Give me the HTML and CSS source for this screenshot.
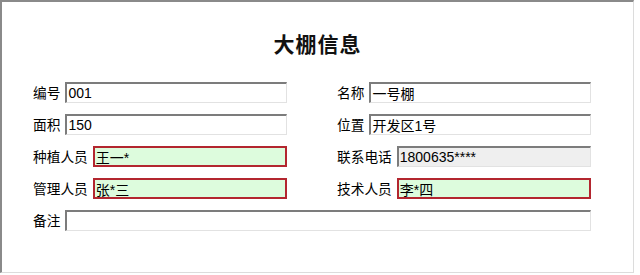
FILE: index.html
```html
<!DOCTYPE html>
<html lang="zh-CN">
<head>
    <meta charset="UTF-8">
    <meta name="viewport" content="width=device-width, initial-scale=1.0">
    <title>大棚信息</title>
    <link rel="stylesheet" href="styles.css">
</head>
<body>
    <div class="panel">
        <h2 class="title">大棚信息</h2>

        <form class="info-form">
            <div class="field">
                <label for="bh">编号</label>
                <input type="text" id="bh" value="001">
            </div>
            <div class="field">
                <label for="mc">名称</label>
                <input type="text" id="mc" value="一号棚">
            </div>
            <div class="field">
                <label for="mj">面积</label>
                <input type="text" id="mj" value="150">
            </div>
            <div class="field">
                <label for="wz">位置</label>
                <input type="text" id="wz" value="开发区1号">
            </div>
            <div class="field">
                <label for="zz">种植人员</label>
                <input type="text" id="zz" class="required" value="王一*">
            </div>
            <div class="field">
                <label for="dh">联系电话</label>
                <input type="text" id="dh" class="readonly" value="1800635****" readonly>
            </div>
            <div class="field">
                <label for="gl">管理人员</label>
                <input type="text" id="gl" class="required" value="张*三">
            </div>
            <div class="field">
                <label for="js">技术人员</label>
                <input type="text" id="js" class="required" value="李*四">
            </div>
            <div class="field wide">
                <label for="bz">备注</label>
                <input type="text" id="bz" value="">
            </div>
        </form>
    </div>
</body>
</html>
```

FILE: styles.css
```css
body {
    margin: 0;
    background-color: #fff;
    font-family: 'Liberation Sans', 'Noto Sans CJK SC', sans-serif;
    color: #000;
}

.panel {
    box-sizing: border-box;
    width: 634px;
    height: 273px;
    padding-top: 31px;
    border-top: 2px solid #8a8a8a;
    border-left: 2px solid #8a8a8a;
    border-right: 1px solid #dcdcdc;
    border-bottom: 1px solid #dcdcdc;
}

.title {
    margin: 0;
    text-align: center;
    font-size: 21px;
    line-height: 24px;
    letter-spacing: 1px;
    font-weight: bold;
    color: #111;
}

.info-form {
    display: grid;
    grid-template-columns: 254px 254px;
    column-gap: 50px;
    row-gap: 11px;
    margin-top: 25px;
    padding-left: 31px;
}

.field {
    display: flex;
    align-items: center;
    gap: 5px;
}

.field.wide {
    grid-column: 1 / -1;
}

label {
    font-family: 'Noto Sans CJK SC', sans-serif;
    font-size: 13.7px;
    line-height: 21px;
    white-space: nowrap;
}

input {
    flex: 1;
    min-width: 0;
    box-sizing: border-box;
    height: 21px;
    margin: 0;
    padding: 0 1px;
    font-family: 'Liberation Sans', 'Noto Sans CJK SC', sans-serif;
    font-size: 14px;
    color: #000;
    background-color: #fff;
    border-style: solid;
    border-width: 2px 1px 1px 2px;
    border-color: #7c7c7c #e2e2e2 #e2e2e2 #7c7c7c;
    outline: none;
}

input.required {
    border: 2px solid #b3262f;
    background-color: #ddfcdd;
}

input.readonly {
    background-color: #efefef;
}
```
